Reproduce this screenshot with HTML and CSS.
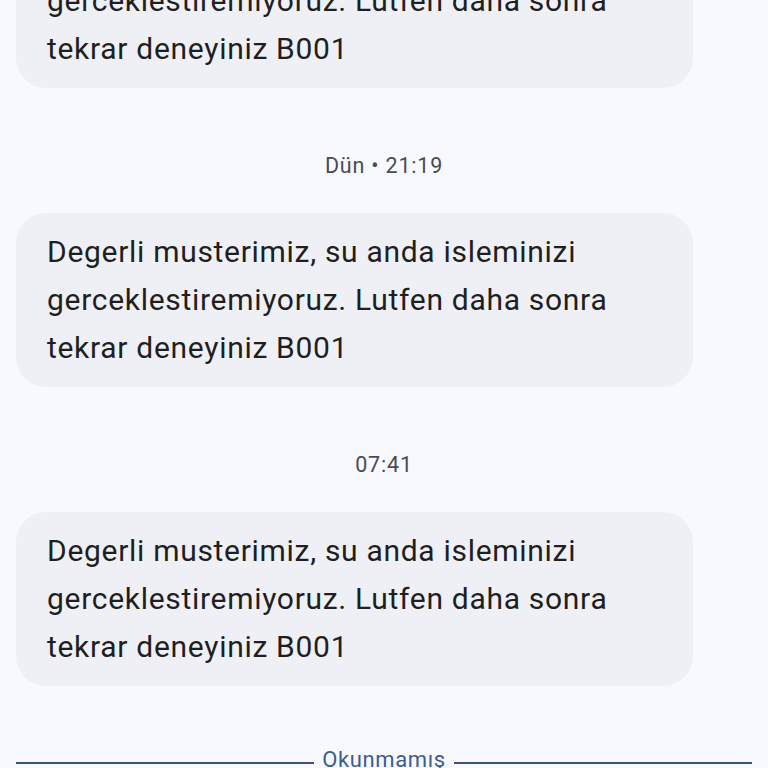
FILE: index.html
```html
<!DOCTYPE html>
<html lang="tr">
<head>
<meta charset="utf-8">
<link rel="stylesheet" href="styles.css">
</head>
<body>
<main class="thread">
  <div class="bubble bubble-first">Degerli musterimiz, su anda isleminizi gerceklestiremiyoruz. Lutfen daha sonra tekrar deneyiniz B001</div>
  <div class="stamp">Dün • 21:19</div>
  <div class="bubble">Degerli musterimiz, su anda isleminizi gerceklestiremiyoruz. Lutfen daha sonra tekrar deneyiniz B001</div>
  <div class="stamp">07:41</div>
  <div class="bubble">Degerli musterimiz, su anda isleminizi gerceklestiremiyoruz. Lutfen daha sonra tekrar deneyiniz B001</div>
  <div class="unread"><span class="unread-line"></span><span class="unread-label">Okunmamış</span><span class="unread-line"></span></div>
</main>
</body>
</html>
```
FILE: styles.css
```css
html, body {
  margin: 0;
  padding: 0;
  background: #f7f9fe;
  overflow: hidden;
  height: 768px;
}
.thread {
  display: flex;
  flex-direction: column;
  align-items: flex-start;
  padding: 0 16px;
  font-family: Roboto, "Noto Sans", sans-serif;
}
.bubble {
  box-sizing: border-box;
  width: 677px;
  background: #eff0f6;
  border-radius: 30px;
  padding: 15px 20px 15px 31px;
  color: #1f1f1f;
  font-size: 30px;
  letter-spacing: 0.7px;
  line-height: 48px;
}
.bubble-first {
  margin-top: -86px;
}
.stamp {
  align-self: center;
  margin: 64px 0 33px;
  font-size: 21.5px;
  letter-spacing: 0.8px;
  line-height: 28px;
  color: #4a4c52;
}
.unread {
  align-self: stretch;
  display: flex;
  align-items: center;
  gap: 8px;
  margin-top: 60px;
  color: #3f5c8a;
  font-size: 22px;
  letter-spacing: 0.6px;
  line-height: 28px;
}
.unread-line {
  flex: 1;
  height: 2px;
  background: #3d5478;
  margin-top: 6px;
}
.unread-label {
  flex: none;
}
```
